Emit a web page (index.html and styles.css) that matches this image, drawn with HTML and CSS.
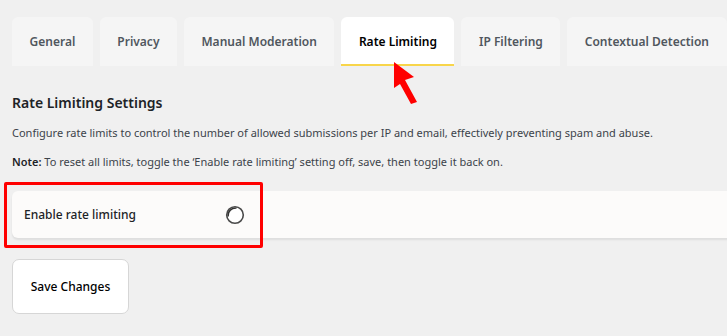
FILE: index.html
```html
<!DOCTYPE html>
<html lang="en">
<head>
  <meta charset="UTF-8" />
  <meta name="viewport" content="width=device-width, initial-scale=1.0" />
  <title>Rate Limiting Settings</title>
  <link rel="stylesheet" href="styles.css">
</head>
<body>
  <nav class="tabs">
    <a class="tab" href="#">General</a>
    <a class="tab" href="#">Privacy</a>
    <a class="tab" href="#">Manual Moderation</a>
    <a class="tab active" href="#">Rate Limiting</a>
    <a class="tab" href="#">IP Filtering</a>
    <a class="tab" href="#">Contextual Detection</a>
  </nav>

  <svg class="pointer" width="30" height="46" viewBox="0 0 30 46">
    <polygon points="3,1 23,16 14,19 26,41 20,43 9,23 3,27" fill="#f00" />
  </svg>

  <h2 class="section-title">Rate Limiting Settings</h2>
  <p class="desc">Configure rate limits to control the number of allowed submissions per IP and email, effectively preventing spam and abuse.</p>
  <p class="desc note"><strong>Note:</strong> To reset all limits, toggle the ‘Enable rate limiting’ setting off, save, then toggle it back on.</p>

  <div class="card-wrap">
    <div class="card">
      <span class="card-label">Enable rate limiting</span>
      <svg class="toggle" width="20" height="20" viewBox="0 0 20 20">
        <circle cx="10" cy="10" r="8.3" fill="#fff" stroke="#4a4a4a" stroke-width="1.6" />
        <path d="M3.2 11.5 A7 7 0 0 1 11.5 3.2 A7.5 7.5 0 0 0 3.2 11.5 Z" fill="#333" stroke="#333" stroke-width="1.2" />
      </svg>
    </div>
    <div class="highlight"></div>
  </div>

  <button class="save-btn">Save Changes</button>
</body>
</html>
```

FILE: styles.css
```css
body {
  font-family: 'Noto Sans', 'Open Sans', sans-serif;
  background: #f0f0f0;
  color: #1d2327;
  margin: 0;
  padding: 17px 12px 0 12px;
  overflow: hidden;
  position: relative;
}
.tabs {
  display: flex;
  gap: 7px;
}
.tab {
  display: flex;
  align-items: center;
  height: 49px;
  box-sizing: border-box;
  padding: 0 17.5px;
  background: #f5f5f5;
  border-radius: 6px 6px 0 0;
  color: #50575e;
  font-size: 12px;
  font-weight: 600;
  text-decoration: none;
  white-space: nowrap;
}
.tab.active {
  background: #fff;
  color: #000;
  border-bottom: 2px solid #f8d54a;
  padding-top: 2px;
}
.pointer {
  position: absolute;
  left: 391px;
  top: 61px;
}
.section-title {
  font-size: 14px;
  line-height: 20px;
  font-weight: 600;
  margin: 27px 0 11px;
  color: #1d2327;
}
.desc {
  font-size: 11px;
  line-height: 18px;
  margin: 0 0 11px;
  color: #3c434a;
}
.desc strong {
  font-weight: 600;
  color: #1d2327;
}
.card-wrap {
  position: relative;
  margin-top: 20px;
  margin-right: -30px;
}
.card {
  display: flex;
  align-items: center;
  height: 47px;
  padding-left: 12px;
  background: #fcfbfa;
  border-radius: 6px;
  box-shadow: 0 2px 2px rgba(0, 0, 0, 0.08);
}
.card-label {
  width: 201px;
  font-size: 12px;
  font-weight: 500;
  color: #1d2327;
}
.toggle {
  display: block;
}
.highlight {
  position: absolute;
  left: -8px;
  top: -9px;
  width: 259px;
  height: 66px;
  box-sizing: border-box;
  border: 3.5px solid #f00;
  border-radius: 2px;
}
.save-btn {
  margin-top: 21px;
  width: 117px;
  height: 55px;
  background: #fff;
  border: 1px solid #d6d6d6;
  border-radius: 7px;
  font-family: inherit;
  font-size: 12px;
  font-weight: 500;
  color: #000;
}
```
